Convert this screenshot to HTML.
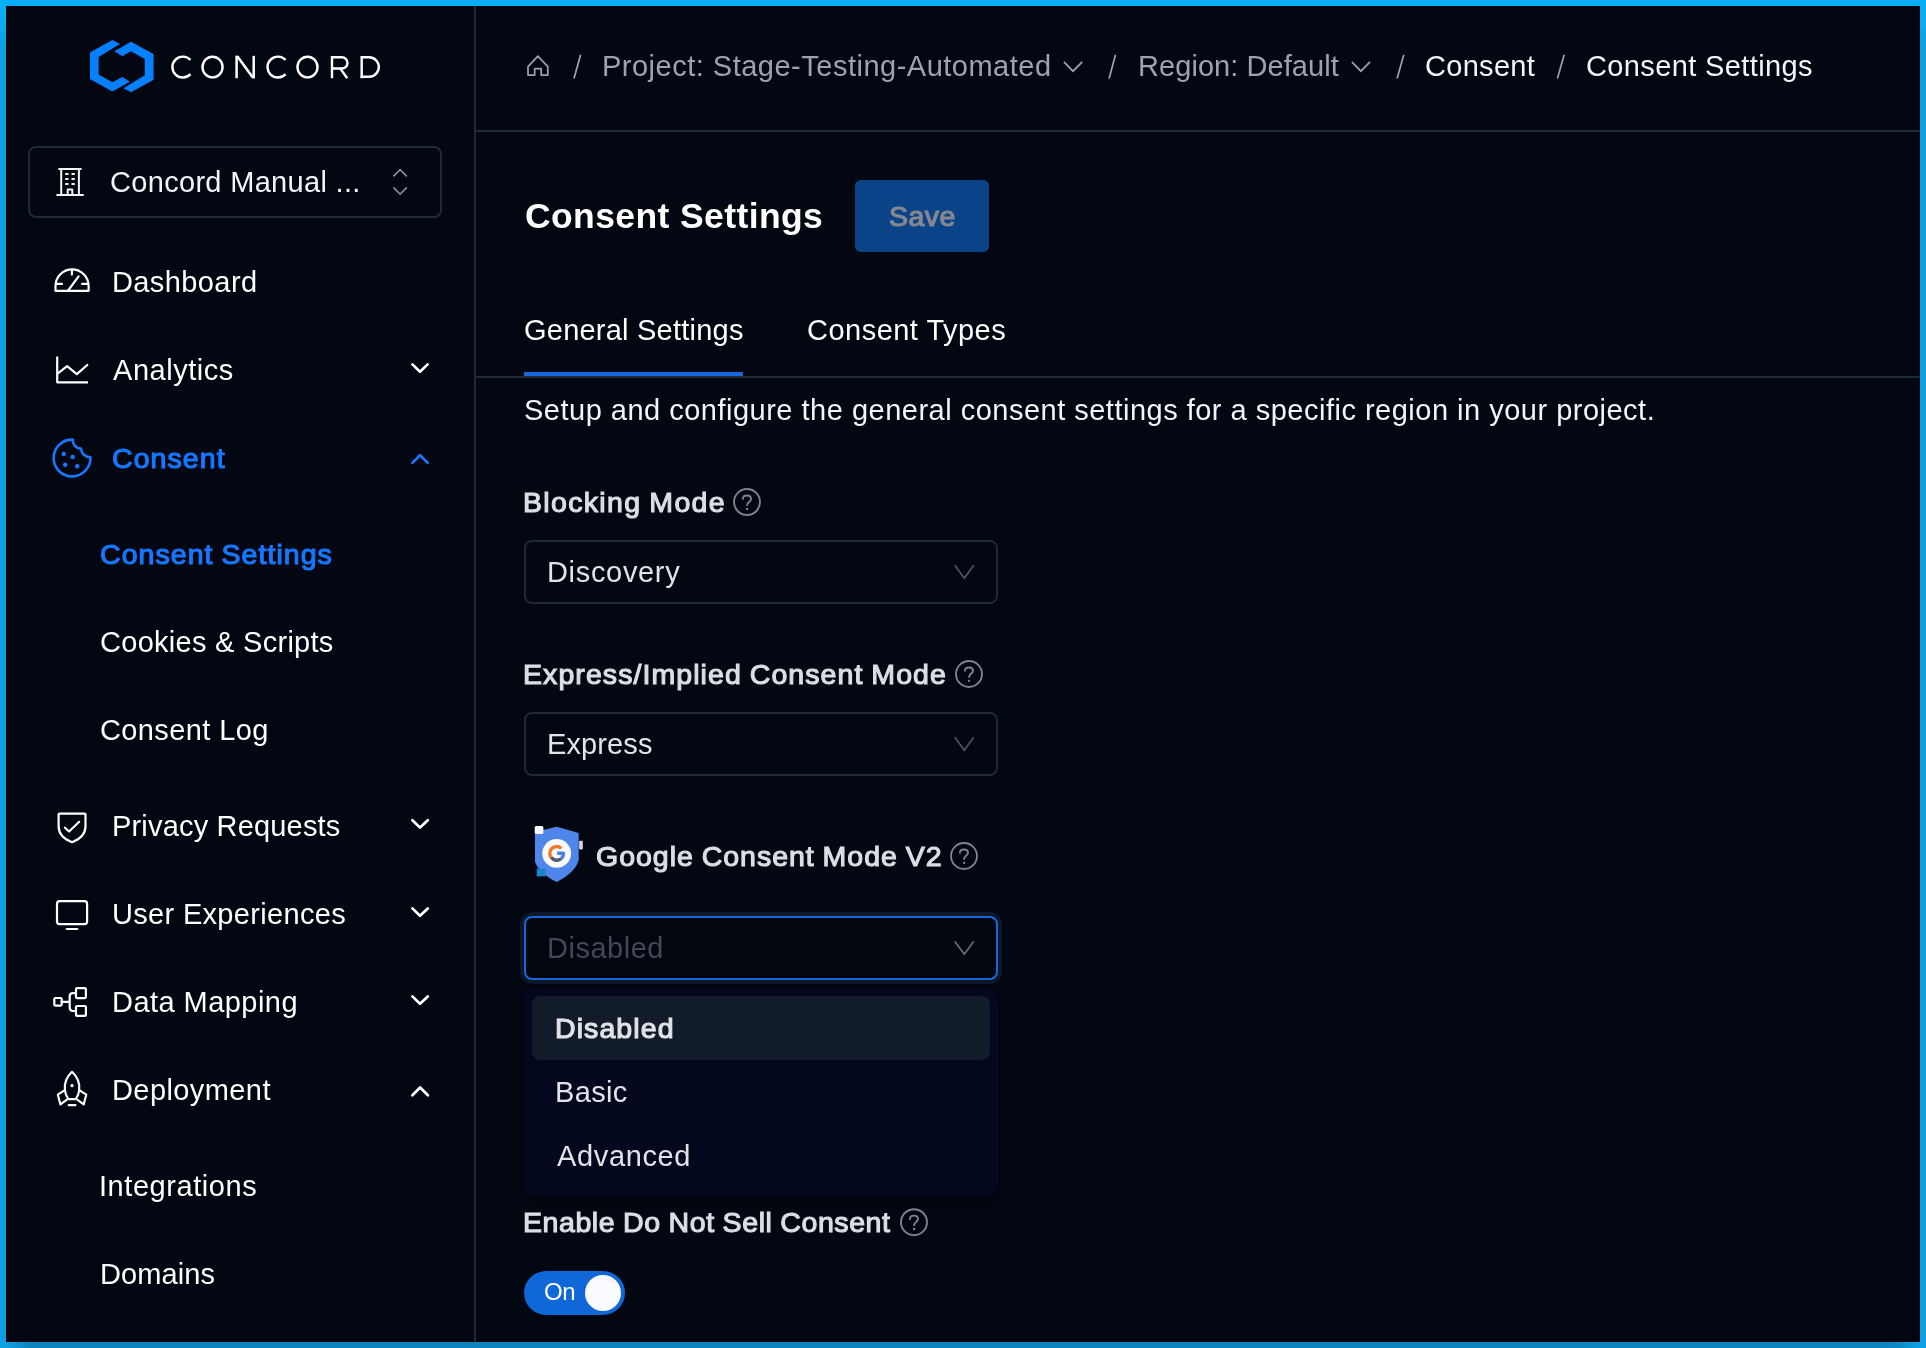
<!DOCTYPE html>
<html><head><meta charset="utf-8"><title>Consent Settings</title>
<style>
html,body{margin:0;padding:0}
body{width:1926px;height:1348px;position:relative;overflow:hidden;background:#0ca2e6;font-family:"Liberation Sans",sans-serif;}
div,span,svg{position:absolute;box-sizing:border-box}
.t{white-space:pre;height:44px;line-height:44px;will-change:transform}
#ft{left:0;top:0;width:1926px;height:6px;background:#0aaef7}
#fl{left:0;top:0;width:6px;height:1348px;background:linear-gradient(180deg,#0aaef7 0,#0aaef7 18px,#0d9fe2 44px,#0d9fe2 100%)}
#fr{left:1920px;top:0;width:6px;height:1348px;background:linear-gradient(180deg,#0aaef7 0,#0aaef7 18px,#0d9fe2 44px,#0d9fe2 100%)}
#fb{left:0;top:1342px;width:1926px;height:6px;background:linear-gradient(90deg,#0d9fe2 0,#0d9fe2 8px,#0c84be 30px,#0c84be 1894px,#0d9fe2 1916px,#0d9fe2 100%)}
#app{left:6px;top:6px;width:1914px;height:1336px;background:#030712;border:1px solid #00020a}
#sbline{left:474px;top:6px;width:2px;height:1336px;background:#1f2937}
#hdline{left:476px;top:130px;width:1444px;height:2px;background:#1f2937}
#org{left:28px;top:146px;width:414px;height:72px;border:2px solid #1f2937;border-radius:8px}
#save{left:855px;top:180px;width:134px;height:72px;background:#0b4389;border-radius:6px}
#tabline{left:476px;top:376px;width:1444px;height:2px;background:#1f2937}
#tabink{left:524px;top:372px;width:219px;height:4px;background:#1668dc}
.sel{left:524px;width:474px;height:64px;border:2px solid #1f2937;border-radius:8px}
#sel3{border-color:#1668dc;background:#03050f;box-shadow:0 0 0 4px #0d182d}
#dd{left:524px;top:988px;width:474px;height:207px;background:#04081f;border-radius:8px;box-shadow:0 6px 16px 0 rgba(0,0,0,.38)}
#ddsel{left:532px;top:996px;width:458px;height:64px;background:#111b29;border-radius:8px}
#tog{left:524px;top:1271px;width:101px;height:44px;border-radius:22px;background:#0f67d8}
#knob{left:585px;top:1275px;width:36px;height:36px;border-radius:18px;background:#fafbfe}

</style></head>
<body>
<div id="fl"></div><div id="fr"></div><div id="fb"></div><div id="ft"></div>
<div id="app"></div>
<div id="sbline"></div><div id="hdline"></div>
<div id="org"></div>
<div id="save"></div>
<div id="tabline"></div><div id="tabink"></div>
<div class="sel" style="top:540px"></div>
<div class="sel" style="top:712px"></div>
<div class="sel" id="sel3" style="top:916px"></div>
<div id="dd"></div><div id="ddsel"></div>
<div id="tog"></div><div id="knob"></div>
<!-- logo -->
<svg style="left:80px;top:30px" width="320" height="80" viewBox="0 0 1926 481.5">
<g fill="#0580ff">
<polygon points="240,85 195,60 60,135 60,295 195,370 300,312 255,283 195,315 112,268 112,162"/>
<polygon points="207,128 307,70 443,145 443,300 307,375 262,350 390,272 390,175 307,128 255,158"/>
</g>
<g fill="none" stroke="#ffffff" stroke-width="14.5">
<path d="M664.9 180.2 A62.8 62.8 0 1 0 664.9 265.8"/>
<ellipse cx="797.7" cy="223" rx="60.5" ry="62.2"/>
<path d="M1237.4 180.2 A62.8 62.8 0 1 0 1237.4 265.8"/>
<ellipse cx="1369.2" cy="223" rx="60.4" ry="62.2"/>
<path d="M1516.7 290.3 V164.3 H1576.1 A33.6 33.6 0 0 1 1576.1 231.5 H1516.7 M1568 234 L1608.5 290.3"/>
<path d="M1695.4 290.3 V164.3 H1739.7 A58.75 58.75 0 0 1 1739.7 281.8 H1687"/>
</g>
<g fill="#ffffff" stroke="none">
<rect x="935" y="155.5" width="15" height="134.8"/>
<rect x="1038" y="155.5" width="15" height="134.8"/>
<polygon points="935,155.5 954,155.5 1053,290.3 1034,290.3"/>
</g>
</svg>
<!-- all icons in page coordinates -->
<svg style="left:0;top:0" width="1926" height="1348" viewBox="0 0 1926 1348" fill="none" stroke-linecap="round" stroke-linejoin="round">
<!-- building -->
<g stroke="#f3f4f6" stroke-width="2" stroke-linecap="butt">
<path d="M58.4 169 H81.6 M61.2 169 V195 M78.9 169 V195 M56.4 194.9 H83.7 M67.7 195 V189.6 H72.3 V195"/>
<path d="M65.2 174 H68.5 M71.5 174 H74.8 M65.2 179 H68.5 M71.5 179 H74.8 M65.2 184 H68.5 M71.5 184 H74.8" stroke-width="1.9"/>
</g>
<!-- org chevrons -->
<path d="M393.4 176.4 L400.1 169.7 L406.8 176.4 M393.4 187.4 L400.1 194.2 L406.8 187.4" stroke="#8c919b" stroke-width="1.6" stroke-linecap="butt" stroke-linejoin="miter"/>
<!-- gauge -->
<g stroke="#ffffff" stroke-width="2.2">
<path d="M55.5 290.8 V285.9 A16.55 16.55 0 0 1 88.6 285.9 V290.8 Z"/>
<path d="M68.5 290 L78.6 276.4 M71.9 270 V274.6 M56.6 283.9 H62 M82.1 283.9 H87.5"/>
</g>
<!-- chart -->
<g stroke="#ffffff" stroke-width="2.2">
<path d="M57.2 356.4 V382.3 H88" stroke-linecap="butt"/><path d="M57.9 373.4 L67.1 366.2 L76.8 374.2 L87.3 365"/>
</g>
<!-- cookie -->
<g stroke="#1677ff" stroke-width="2.6">
<path d="M90.4 457.2 A18.4 18.4 0 1 1 72.8 439.6 C72.4 444.4 76 448.6 81 448.6 C81 453.2 84.6 456.9 90.4 457.2 Z"/>
</g>
<g fill="#1677ff"><circle cx="63.7" cy="454" r="2.2"/><circle cx="72.6" cy="457" r="2.2"/><circle cx="65.2" cy="464.7" r="2.2"/><circle cx="77.2" cy="466.3" r="2.2"/></g>
<!-- shield -->
<g stroke="#ffffff" stroke-width="2.2">
<path d="M59.6 813.6 H84.5 Q85.5 813.6 85.5 814.6 V826 C85.5 836 78 840 72.05 842.2 C66 840 58.6 836 58.6 826 V814.6 Q58.6 813.6 59.6 813.6 Z"/>
<path d="M64.9 827.7 L69.1 831.5 L79.2 821.8"/>
</g>
<!-- monitor -->
<g stroke="#ffffff" stroke-width="2.2">
<rect x="57" y="901.1" width="30.1" height="23" rx="2.6"/>
<path d="M66.8 929 H77.3"/>
</g>
<!-- tree -->
<g stroke="#ffffff" stroke-width="2.2">
<rect x="54.3" y="998" width="7.4" height="7.6" rx="1"/>
<rect x="76" y="988.2" width="9.9" height="9.9" rx="1"/>
<rect x="76" y="1006" width="9.9" height="9.9" rx="1"/>
<path d="M61.7 1001.8 H69.7 M76 993.1 H73 Q69.7 993.1 69.7 996.4 V1007.6 Q69.7 1011 73 1011 H76"/>
</g>
<!-- rocket -->
<g stroke="#ffffff" stroke-width="2.1">
<path d="M72 1071.8 C66.7 1076.8 64.3 1083.9 64.9 1089.9 C65.2 1094 66.7 1097 68.3 1099.1 L75.8 1099.1 C77.4 1097 78.9 1094 79.2 1089.9 C79.8 1083.9 77.4 1076.8 72 1071.8 Z"/>
<path d="M64.5 1090.3 L57.8 1094.6 L60.4 1104.4 L66.9 1099.6 M79.6 1090.3 L86.3 1094.6 L83.7 1104.4 L77.2 1099.6"/>
<path d="M68.6 1105.1 H75.5"/>
</g>
<circle cx="72" cy="1085.7" r="1.6" fill="#ffffff"/>
<!-- nav chevrons -->
<g stroke="#ffffff" stroke-width="2.7">
<path d="M412.4 364.4 L420 371.7 L427.6 364.4"/>
<path d="M412.4 820.2 L420 827.6 L427.8 820.2"/>
<path d="M412.4 908.4 L420 915.8 L427.8 908.4"/>
<path d="M412.4 996.4 L420 1003.7 L427.8 996.4"/>
<path d="M412.4 1095.3 L420.1 1087.5 L427.9 1095.3"/>
</g>
<path d="M412.4 462.9 L420.1 455.2 L427.7 462.9" stroke="#1677ff" stroke-width="2.7"/>
<!-- breadcrumb -->
<g stroke="#9ca3af" stroke-width="1.7" stroke-linecap="butt" stroke-linejoin="miter">
<path d="M528 66.6 L537.9 56.1 L547.8 66.6 V75.1 H541.2 V68.7 H534.7 V75.1 H528 Z" stroke-linejoin="round"/>
<path d="M574 78.5 L580.6 54.8 M1109.1 78.5 L1115.5 54.8 M1397.1 78.5 L1403.8 54.8 M1557.4 78.5 L1564.2 54.8"/>
<path d="M1063.9 61.9 L1073 71.2 L1082.2 61.9 M1351.8 61.9 L1360.9 71.2 L1370 61.9"/>
</g>
<!-- select chevrons -->
<g stroke-width="1.7" stroke-linecap="butt" stroke-linejoin="miter">
<path d="M954.8 565.2 L964.3 578.2 L973.7 565.2 M954.8 737.2 L964.3 750.2 L973.7 737.2" stroke="#4b5363"/>
<path d="M954.8 941.6 L964.3 954.2 L973.7 941.6" stroke="#69707e"/>
</g>
<!-- help icons -->
<g stroke="#7d828e" stroke-width="1.9">
<g><circle cx="747" cy="502.05" r="13"/><path d="M742.9 498.9 C742.9 496.5 744.7 495.5 747 495.5 C749.6 495.5 751 497 751 498.9 C751 501.9 747.1 501.9 747.1 505"/><circle cx="747.1" cy="508.9" r="1.2" fill="#7d828e" stroke="none"/></g>
<g transform="translate(222 171.95)"><circle cx="747" cy="502.05" r="13"/><path d="M742.9 498.9 C742.9 496.5 744.7 495.5 747 495.5 C749.6 495.5 751 497 751 498.9 C751 501.9 747.1 501.9 747.1 505"/><circle cx="747.1" cy="508.9" r="1.2" fill="#7d828e" stroke="none"/></g>
<g transform="translate(217 353.95)"><circle cx="747" cy="502.05" r="13"/><path d="M742.9 498.9 C742.9 496.5 744.7 495.5 747 495.5 C749.6 495.5 751 497 751 498.9 C751 501.9 747.1 501.9 747.1 505"/><circle cx="747.1" cy="508.9" r="1.2" fill="#7d828e" stroke="none"/></g>
<g transform="translate(167 720.15)"><circle cx="747" cy="502.05" r="13"/><path d="M742.9 498.9 C742.9 496.5 744.7 495.5 747 495.5 C749.6 495.5 751 497 751 498.9 C751 501.9 747.1 501.9 747.1 505"/><circle cx="747.1" cy="508.9" r="1.2" fill="#7d828e" stroke="none"/></g>
</g>
<!-- google icon -->
<g stroke="none">
<path d="M535 832 L556.7 826.7 L578.7 833 V859.5 Q576.5 871.5 556.7 882.1 Q538 872.5 535 861.5 Z" fill="#5086ec"/>
<rect x="534.7" y="826" width="8.7" height="8" rx="1.6" fill="#fbfbfb"/>
<rect x="579.1" y="840.7" width="3.7" height="8.7" rx="1" fill="#d6d8dc"/>
<rect x="536.7" y="868.7" width="8.7" height="7.7" fill="#1a86c8"/>
<circle cx="556.7" cy="853.4" r="14.4" fill="#fbfbfb"/>
</g>
<g fill="none" stroke-width="3.4" stroke-linecap="butt">
<path d="M561.3 848.4 A6.8 6.8 0 0 0 550 851.8" stroke="#f4772e"/>
<path d="M550 851.8 A6.8 6.8 0 0 0 551.3 857.6" stroke="#f4772e"/>
<path d="M551.3 857.6 A6.8 6.8 0 0 0 561 858.8" stroke="#555b66"/>
<path d="M561 858.8 A6.8 6.8 0 0 0 563.4 853.2 H557.2" stroke="#4a80e8"/>
</g>
</svg>

<span class="t" style="left:110.0px;top:160.0px;font-size:29px;color:#f3f4f6;letter-spacing:0.312px">Concord Manual ...</span>
<span class="t" style="left:111.5px;top:260.0px;font-size:29px;color:#ffffff;letter-spacing:0.400px">Dashboard</span>
<span class="t" style="left:112.7px;top:348.0px;font-size:29px;color:#ffffff;letter-spacing:0.537px">Analytics</span>
<span class="t" style="left:111.7px;top:436.0px;font-size:28.5px;-webkit-text-stroke:1.15px #1677ff;color:#1677ff;letter-spacing:1.083px">Consent</span>
<span class="t" style="left:99.9px;top:532.3px;font-size:28.5px;-webkit-text-stroke:1.15px #1677ff;color:#1677ff;word-spacing:-1.057px;letter-spacing:1.057px">Consent Settings</span>
<span class="t" style="left:99.9px;top:620.0px;font-size:29px;color:#ffffff;letter-spacing:0.281px">Cookies &amp; Scripts</span>
<span class="t" style="left:99.9px;top:708.4px;font-size:29px;color:#ffffff;letter-spacing:0.390px">Consent Log</span>
<span class="t" style="left:111.5px;top:804.0px;font-size:29px;color:#ffffff;letter-spacing:0.180px">Privacy Requests</span>
<span class="t" style="left:111.5px;top:892.0px;font-size:29px;color:#ffffff;letter-spacing:0.320px">User Experiences</span>
<span class="t" style="left:111.6px;top:980.0px;font-size:29px;color:#ffffff;letter-spacing:0.455px">Data Mapping</span>
<span class="t" style="left:111.6px;top:1068.4px;font-size:29px;color:#ffffff;letter-spacing:0.411px">Deployment</span>
<span class="t" style="left:98.5px;top:1164.2px;font-size:29px;color:#ffffff;letter-spacing:0.555px">Integrations</span>
<span class="t" style="left:99.7px;top:1252.0px;font-size:29px;color:#ffffff;letter-spacing:0.100px">Domains</span>
<span class="t" style="left:601.9px;top:44.0px;font-size:29px;color:#9ca3af;letter-spacing:0.497px">Project: Stage-Testing-Automated</span>
<span class="t" style="left:1137.6px;top:44.0px;font-size:29px;color:#9ca3af;letter-spacing:0.064px">Region: Default</span>
<span class="t" style="left:1425.4px;top:44.0px;font-size:29px;color:#f3f4f6;letter-spacing:0.300px">Consent</span>
<span class="t" style="left:1585.8px;top:44.0px;font-size:29px;color:#f3f4f6;letter-spacing:0.380px">Consent Settings</span>
<span class="t" style="left:524.6px;top:194.0px;font-size:35.5px;font-weight:700;color:#ffffff;letter-spacing:0.393px">Consent Settings</span>
<span class="t" style="left:889.1px;top:193.8px;font-size:28.5px;-webkit-text-stroke:1.15px #86888e;color:#86888e;letter-spacing:0.433px">Save</span>
<span class="t" style="left:523.8px;top:308.0px;font-size:29px;color:#ffffff;letter-spacing:0.227px">General Settings</span>
<span class="t" style="left:806.8px;top:308.0px;font-size:29px;color:#ffffff;letter-spacing:0.483px">Consent Types</span>
<span class="t" style="left:524.4px;top:388.2px;font-size:29px;color:#f3f4f6;letter-spacing:0.495px">Setup and configure the general consent settings for a specific region in your project.</span>
<span class="t" style="left:523.4px;top:480.1px;font-size:28.5px;-webkit-text-stroke:1.15px #dcdee2;color:#dcdee2;word-spacing:-1.336px;letter-spacing:1.336px">Blocking Mode</span>
<span class="t" style="left:547.1px;top:550.0px;font-size:29px;color:#e1e3e7;letter-spacing:0.675px">Discovery</span>
<span class="t" style="left:522.9px;top:652.0px;font-size:28.5px;-webkit-text-stroke:1.15px #dcdee2;color:#dcdee2;word-spacing:-1.072px;letter-spacing:1.072px">Express/Implied Consent Mode</span>
<span class="t" style="left:547.4px;top:722.0px;font-size:29px;color:#e1e3e7;letter-spacing:0.117px">Express</span>
<span class="t" style="left:596.2px;top:834.0px;font-size:28.5px;-webkit-text-stroke:1.15px #dcdee2;color:#dcdee2;word-spacing:-0.978px;letter-spacing:0.978px">Google Consent Mode V2</span>
<span class="t" style="left:547.1px;top:926.0px;font-size:29px;color:#424956;letter-spacing:0.514px">Disabled</span>
<span class="t" style="left:555.2px;top:1006.0px;font-size:28.5px;-webkit-text-stroke:1.15px #e1e3e7;color:#e1e3e7;letter-spacing:1.086px">Disabled</span>
<span class="t" style="left:555.2px;top:1070.0px;font-size:29px;color:#e1e3e7;letter-spacing:0.350px">Basic</span>
<span class="t" style="left:557.2px;top:1134.0px;font-size:29px;color:#e1e3e7;letter-spacing:0.643px">Advanced</span>
<span class="t" style="left:523.4px;top:1200.2px;font-size:28.5px;-webkit-text-stroke:1.15px #dcdee2;color:#dcdee2;word-spacing:-0.576px;letter-spacing:0.576px">Enable Do Not Sell Consent</span>
<span class="t" style="left:543.7px;top:1270.0px;font-size:24px;color:#ffffff;letter-spacing:-0.300px">On</span>
</body></html>
